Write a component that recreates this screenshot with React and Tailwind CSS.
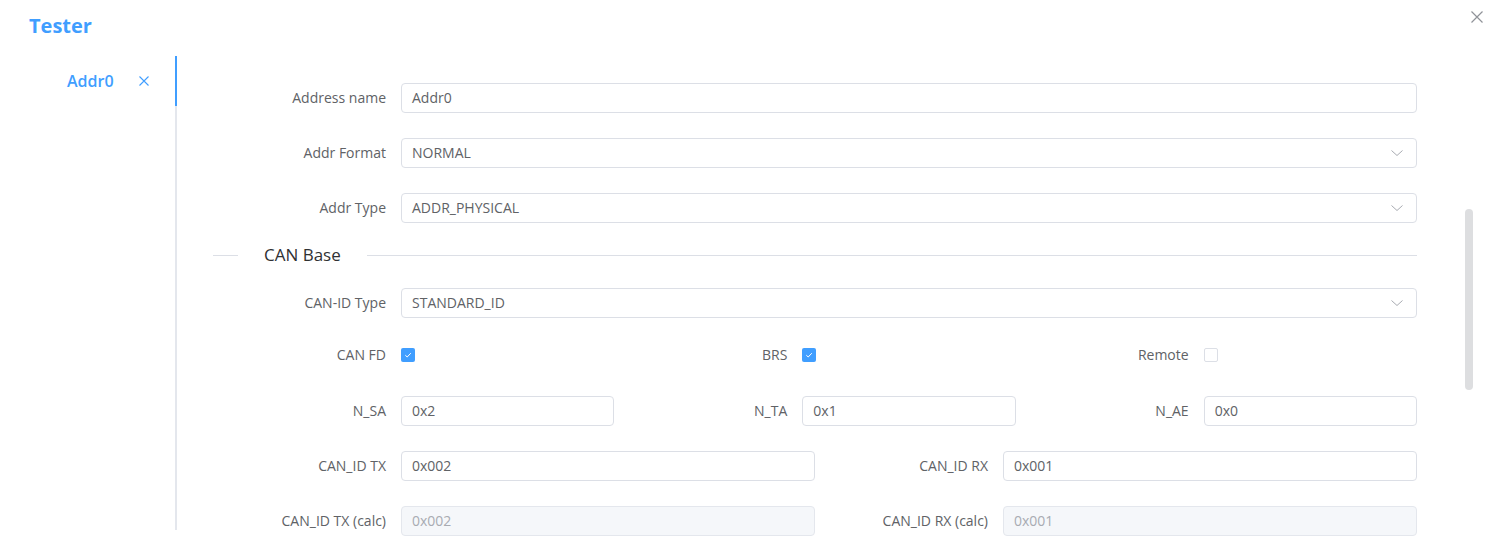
import React from "react";

const font = { fontFamily: '"Open Sans", "Noto Sans", Arial, sans-serif' };

function Chevron() {
  return (
    <svg width="14" height="14" viewBox="0 0 14 14" className="text-[#a8abb2]">
      <path d="M1.5 4.5 L7 9.5 L12.5 4.5" fill="none" stroke="currentColor" strokeWidth="1" />
    </svg>
  );
}

function Label({ children }) {
  return (
    <div className="w-[188px] shrink-0 pr-[15px] text-right text-[14px] text-[#606266] leading-[20px]">
      {children}
    </div>
  );
}

function Input({ value, select, disabled }) {
  return (
    <div
      className={
        "flex-1 h-[30px] rounded-[4px] border flex items-center pl-[10px] pr-[12px] text-[14px] " +
        (disabled
          ? "bg-[#f5f7fa] border-[#e4e7ed] text-[#a8abb2]"
          : "bg-white border-[#dcdfe6] text-[#606266]")
      }
    >
      <span className="flex-1">{value}</span>
      {select && <Chevron />}
    </div>
  );
}

function Check({ checked }) {
  return checked ? (
    <div className="w-[14px] h-[14px] rounded-[2px] bg-[#409eff] flex items-center justify-center">
      <svg width="10" height="10" viewBox="0 0 10 10">
        <path d="M2.3 5.2 L4.2 7 L7.8 3.2" fill="none" stroke="white" strokeWidth="1" />
      </svg>
    </div>
  ) : (
    <div className="w-[14px] h-[14px] rounded-[2px] border border-[#dcdfe6] bg-white" />
  );
}

function Item({ label, children, className = "" }) {
  return (
    <div className={"flex items-center flex-1 " + className}>
      <Label>{label}</Label>
      <div className="flex-1 flex items-center">{children}</div>
    </div>
  );
}

function Row({ h = "h-[55px]", children }) {
  return <div className={"flex items-center " + h}>{children}</div>;
}

export default function App() {
  return (
    <div className="w-[1490px] h-[540px] overflow-hidden bg-white relative" style={font}>
      <div className="flex items-center justify-between h-[56px] pl-[29px] pr-[6px]">
        <div className="text-[20px] font-bold text-[#409eff] -mt-[4px]">Tester</div>
        <svg width="14" height="14" viewBox="0 0 14 14" className="text-[#909399] self-start mt-[10px]">
          <path d="M1.5 1.5 L12.5 12.5 M12.5 1.5 L1.5 12.5" stroke="currentColor" strokeWidth="1.2" />
        </svg>
      </div>
      <div className="flex h-[484px]">
        <div className="w-[177px] shrink-0 self-start h-[474px] border-r-2 border-[#e4e7ed] relative">
          <div className="h-[50px] flex items-center pl-[67px] -mr-[2px] border-r-2 border-[#409eff]">
            <span className="text-[16px] font-semibold text-[#409eff]">Addr0</span>
            <svg width="12" height="12" viewBox="0 0 12 12" className="ml-[24px] text-[#409eff]">
              <path d="M1.5 1.5 L10.5 10.5 M10.5 1.5 L1.5 10.5" stroke="currentColor" strokeWidth="1.1" />
            </svg>
          </div>
        </div>
        <div className="flex-1 flex">
          <div className="w-[1204px] ml-[36px] pt-[14px]">
            <Row>
              <Item label="Address name"><Input value="Addr0" /></Item>
            </Row>
            <Row>
              <Item label="Addr Format"><Input value="NORMAL" select /></Item>
            </Row>
            <Row>
              <Item label="Addr Type"><Input value="ADDR_PHYSICAL" select /></Item>
            </Row>
            <div className="h-[40px] flex items-center">
              <div className="w-[25px] h-px bg-[#dcdfe6]" />
              <div className="px-[26px] text-[17px] text-[#303133] font-medium">CAN Base</div>
              <div className="flex-1 h-px bg-[#dcdfe6]" />
            </div>
            <Row>
              <Item label="CAN-ID Type"><Input value="STANDARD_ID" select /></Item>
            </Row>
            <div className="h-[53px] flex items-center pb-[4px]">
              <Item label="CAN FD"><Check checked /></Item>
              <Item label="BRS"><Check checked /></Item>
              <Item label="Remote"><Check /></Item>
            </div>
            <Row>
              <Item label="N_SA"><Input value="0x2" /></Item>
              <Item label="N_TA"><Input value="0x1" /></Item>
              <Item label="N_AE"><Input value="0x0" /></Item>
            </Row>
            <Row>
              <Item label="CAN_ID TX"><Input value="0x002" /></Item>
              <Item label="CAN_ID RX"><Input value="0x001" /></Item>
            </Row>
            <Row>
              <Item label="CAN_ID TX (calc)"><Input value="0x002" disabled /></Item>
              <Item label="CAN_ID RX (calc)"><Input value="0x001" disabled /></Item>
            </Row>
          </div>
          <div className="flex-1 relative">
            <div className="absolute left-[48px] top-[153px] w-[8px] h-[181px] rounded-full bg-[#dddee0]" />
          </div>
        </div>
      </div>
    </div>
  );
}
